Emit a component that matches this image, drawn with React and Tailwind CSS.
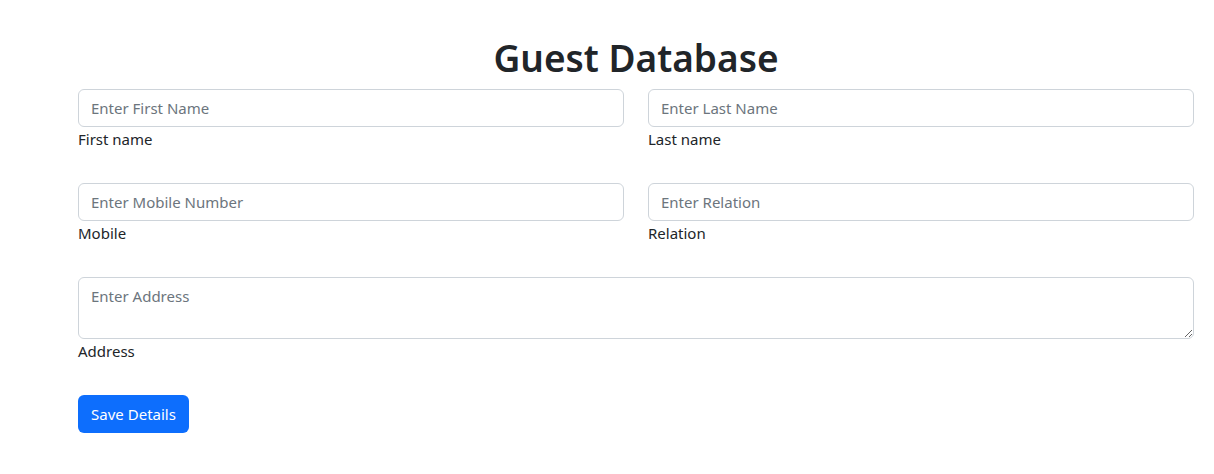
import React from "react";

const Field = ({ placeholder, label }) => (
  <div>
    <input
      type="text"
      placeholder={placeholder}
      className="block w-full h-[38px] px-3 border border-[#ced4da] rounded-md bg-white text-[15px] text-[#212529] placeholder:text-[#6c757d] outline-none"
    />
    <label className="block text-[15px] leading-6 text-[#212529]">{label}</label>
  </div>
);

const App = () => {
  return (
    <div
      className="min-h-screen bg-white text-[#212529]"
      style={{ fontFamily: '"Noto Sans", "Open Sans", sans-serif' }}
    >
      <div className="ml-[78px] mr-[20px] pt-[34px]">
        {/* Title */}
        <h1 className="text-center text-[37px] leading-[48px] font-semibold mb-[7px]">
          Guest Database
        </h1>

        <form className="flex flex-col gap-8">
          <div className="grid grid-cols-2 gap-6">
            <Field placeholder="Enter First Name" label="First name" />
            <Field placeholder="Enter Last Name" label="Last name" />
          </div>
          <div className="grid grid-cols-2 gap-6">
            <Field placeholder="Enter Mobile Number" label="Mobile" />
            <Field placeholder="Enter Relation" label="Relation" />
          </div>
          <div>
            <textarea
              rows={2}
              placeholder="Enter Address"
              className="block w-full h-[62px] px-3 py-1.5 border border-[#ced4da] rounded-md bg-white text-[15px] leading-6 text-[#212529] placeholder:text-[#6c757d] outline-none"
            />
            <label className="block text-[15px] leading-6">Address</label>
          </div>
          <div>
            <button
              type="button"
              className="h-[38px] w-[111px] rounded-md bg-[#0d6efd] text-white text-[15px]"
            >
              Save Details
            </button>
          </div>
        </form>
      </div>
    </div>
  );
};

export default App;
